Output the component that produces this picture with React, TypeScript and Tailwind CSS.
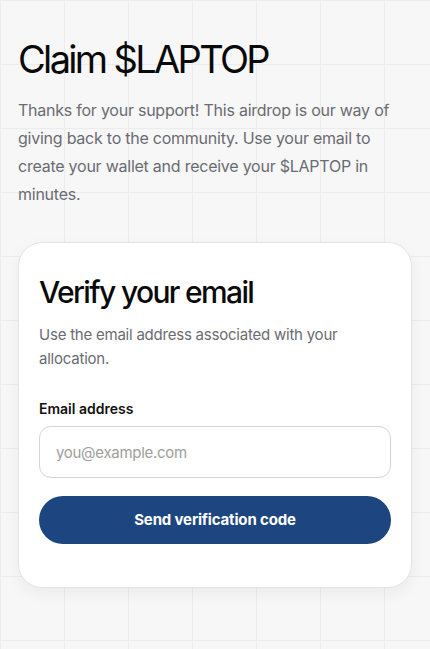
export default function App() {
  return (
    <div
      className="min-h-[649px] w-full bg-[#f7f7f7] bg-[linear-gradient(to_right,#ececec_1px,transparent_1px),linear-gradient(to_bottom,#ececec_1px,transparent_1px)] bg-[size:64px_64px] px-[18px] pt-[37px] pb-10 text-[#0a0a0a]"
      style={{ fontFamily: "Inter, 'Noto Sans', sans-serif" }}
    >
      {/* Page header */}
      <h1 className="text-[38px] leading-[44px] font-normal tracking-[-0.07em]">
        Claim $LAPTOP
      </h1>
      <p className="mt-[15px] text-[16px] leading-[28px] tracking-[-0.015em] text-[#6b6b72]">
        Thanks for your support! This airdrop is our way of giving back to the
        community. Use your email to create your wallet and receive your
        $LAPTOP in minutes.
      </p>

      {/* Verify card */}
      <div className="mt-[34px] rounded-[24px] border border-[#e4e4e4] bg-white px-5 pt-[31px] pb-[43px] shadow-[0_6px_16px_rgba(0,0,0,0.05)]">
        <h2 className="text-[30px] leading-[36px] font-medium tracking-[-0.055em]">
          Verify your email
        </h2>
        <p className="mt-[13px] text-[15px] leading-[24px] tracking-[-0.015em] text-[#6b6b72]">
          Use the email address associated with your allocation.
        </p>

        <label className="mt-[28px] block text-[14px] leading-[20px] font-semibold text-[#111]">
          Email address
        </label>
        <input
          type="email"
          placeholder="you@example.com"
          className="mt-[7px] block h-[52px] w-full rounded-[12px] border border-[#d4d4d4] bg-white px-4 text-[15px] tracking-[-0.02em] placeholder:text-[#9e9e9e] focus:outline-none"
        />
        <button className="mt-[18px] h-[48px] w-full rounded-full bg-[#1d4580] text-[15px] font-bold tracking-[-0.01em] text-white">
          Send verification code
        </button>
      </div>
    </div>
  );
}
